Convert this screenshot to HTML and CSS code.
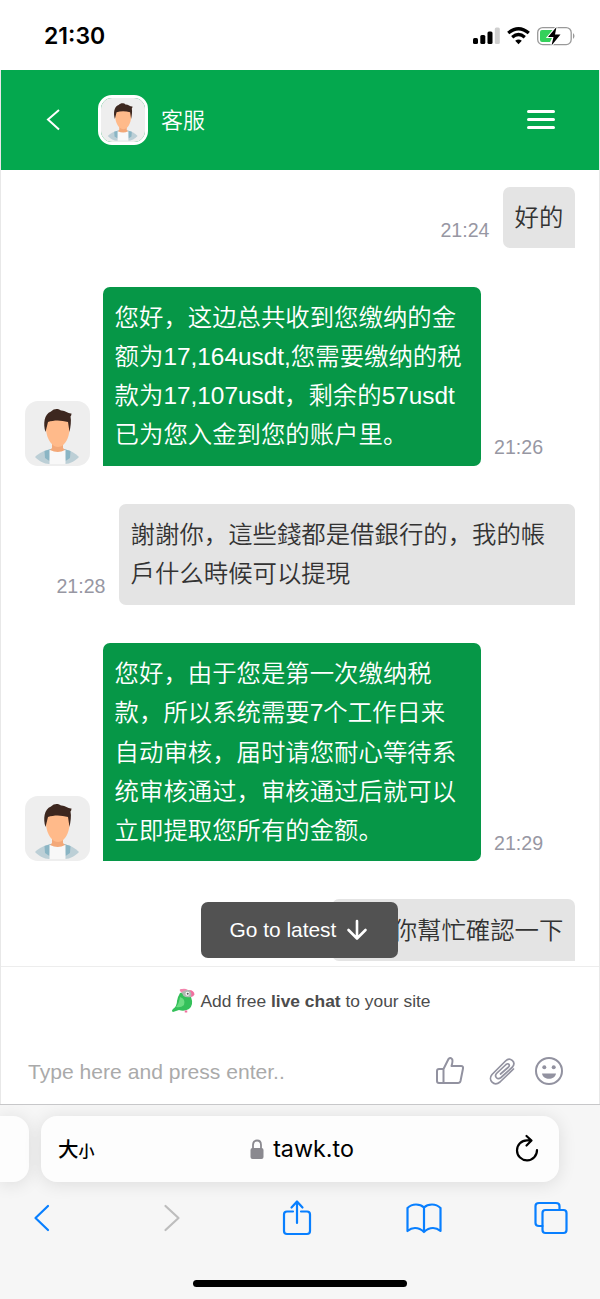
FILE: index.html
```html
<!DOCTYPE html>
<html lang="zh">
<head>
<meta charset="utf-8">
<title>客服</title>
<link rel="stylesheet" href="styles.css">
</head>
<body>
<svg class="defs" width="0" height="0">
  <symbol id="person" viewBox="0 0 65 65">
    <rect width="65" height="65" fill="#eeeeee"/>
    <path d="M10 56C14 52 20 49 25 48.500H40C45 49 50 52 54 56C50 60 45 63 40 63H24C19 63 14 60 10 56Z" fill="#bccfd6"/>
    <path d="M19.500 50L26 48L24.500 60L20 57ZM45.500 50L39 48L40.500 60L45 57Z" fill="#8ab5c4"/>
    <path d="M24.500 49H40.500V63H24.500Z" fill="#f8f8f8"/>
    <path d="M27 41H38V47L40 49Q33 53 25 49L27 47Z" fill="#f3a878"/>
    <path d="M21 21Q32 13 44.500 21C46 33 41 46 33 46C25 46 19.500 33 21 21Z" fill="#ffba8a"/>
    <path d="M20.500 31C18 23 19 13 26 10.500C29 7 34 7.500 36 9.500C40 9 43 13 46.500 12.500Q46.500 14.500 45.500 15.500C46.500 20 45.500 26 44.500 31L43 21C36 19 29 19 23 21Z" fill="#3d271f"/>
  </symbol>
</svg>

<div class="status">
  <span class="clock">21:30</span>
  <svg width="104" height="24" viewBox="0 0 104 24">
    <rect x="1" y="14" width="5" height="6" rx="1.500"/><rect x="8.300" y="11" width="5" height="9" rx="1.500"/><rect x="15.500" y="7.500" width="5" height="12.500" rx="1.500"/><rect x="22.800" y="3.500" width="5" height="16.500" rx="1.500" fill="#cfcfcf"/>
    <g fill="none" stroke="#000" stroke-width="3.300"><path d="M36.200 9Q46.500 0.500 56.800 9"/><path d="M40.200 13.200Q46.500 7.800 52.800 13.200"/></g>
    <path d="M43.200 16.800Q46.500 14.200 49.800 16.800L46.500 20.200Z"/>
    <rect x="65.700" y="3.600" width="33.500" height="17" rx="5" fill="#fff" stroke="#999" stroke-width="1.300"/>
    <path d="M70 6H81L76 14H80L78 18H70Q68 18 68 16V8Q68 6 70 6Z" fill="#34d15b"/>
    <path d="M84.500 3L76 13H81.500L79.500 21.500L88.500 10.500H83Z" stroke="#fff" stroke-width="2" paint-order="stroke"/>
    <path d="M101 9Q104 12 101 15Z" fill="#999"/>
  </svg>
</div>

<main class="chat">
  <header class="header">
    <svg class="back" width="16" height="24" viewBox="0 0 16 24"><path d="M14 2L3 11.500L14 21.500" fill="none" stroke="#fff" stroke-width="2"/></svg>
    <svg class="agent"><use href="#person"/></svg>
    <h1>客服</h1>
    <svg width="28" height="22" viewBox="0 0 28 22"><path d="M1.500 2.500H26.500M1.500 10.500H26.500M1.500 18.500H26.500" stroke="#fff" stroke-width="3" stroke-linecap="round"/></svg>
  </header>

  <section class="messages">
    <div class="row sent"><time>21:24</time><p class="bubble">好的</p></div>
    <div class="row received"><svg class="avatar"><use href="#person"/></svg><p class="bubble">您好，这边总共收到您缴纳的金<br>额为17,164usdt,您需要缴纳的税<br>款为17,107usdt，剩余的57usdt<br>已为您入金到您的账户里。</p><time>21:26</time></div>
    <div class="row sent"><time>21:28</time><p class="bubble wide">謝謝你，這些錢都是借銀行的，我的帳<br>戶什么時候可以提現</p></div>
    <div class="row received"><svg class="avatar"><use href="#person"/></svg><p class="bubble">您好，由于您是第一次缴纳税<br>款，所以系统需要7个工作日来<br>自动审核，届时请您耐心等待系<br>统审核通过，审核通过后就可以<br>立即提取您所有的金额。</p><time>21:29</time></div>
    <div class="row sent"><p class="bubble">謝謝你幫忙確認一下</p></div>
    <button class="latest">Go to latest
      <svg width="22" height="22" viewBox="0 0 22 22"><path d="M11 2V19M2.500 11L11 19.500L19.500 11" fill="none" stroke="#fff" stroke-width="2.600" stroke-linecap="round" stroke-linejoin="round"/></svg>
    </button>
  </section>

  <footer class="footer">
    <div class="brand">
      <svg width="24" height="26" viewBox="0 0 24 26">
        <path d="M9 3Q8 .5 11 1Q14 0 17 2L12 6Z" fill="#f285ad"/>
        <path d="M18 2Q23 2 23.500 6.500Q22.500 8.500 20 9Z" fill="#f26f9f"/>
        <path d="M10 5Q13 1.500 18 2Q21.500 5 20 9L16 12L11 9Z" fill="#b3b8b3"/>
        <path d="M9 5Q11 4 12.500 8Q15 10 20 9Q23 17 18 21Q13 24 8 22L2 24Q0 23 2 21Q6 18 6 13Q7 8 9 5Z" fill="#34c05a"/>
        <path d="M9 9Q15 11 13 17Q10 20 5 19Q8 16 9 9Z" fill="#6bdc82"/>
        <circle cx="16.500" cy="5.800" r="2" fill="#fff"/><circle cx="16.700" cy="5.800" r="1" fill="#555"/>
        <path d="M15 22.500V24.500" stroke="#f26f9f" stroke-width="2.500"/>
      </svg>
      <span>Add free <b>live chat</b> to your site</span>
    </div>
    <div class="composer">
      <span class="placeholder">Type here and press enter..</span>
      <svg width="30" height="30" viewBox="0 0 30 30"><path d="M8.500 13L13.500 3Q15.500 1 17.200 3.300Q18 5 16.500 10H26Q28.500 10 28 12.500L25.500 25Q25 27 23 27H4Q2 27 2 25V15Q2 13 4 13H8.500V27"/></svg>
      <svg class="clip" width="30" height="30" viewBox="0 0 30 30"><path d="M26.500 13L13 26C7 31 .5 24 5 18.500L18.500 5C23 .5 29.500 6 25.500 11L14 21.500C10.500 24.500 7 20.500 9.500 17.500L19 8.500Q21 7 22 8.500Q23 10 21 11.500L13.500 18"/></svg>
      <svg width="30" height="30" viewBox="0 0 30 30"><circle cx="15" cy="15" r="13"/><path class="solid" d="M8 17.500H22C21 24.500 9 24.500 8 17.500Z"/><circle class="solid" cx="10.300" cy="11.300" r="2"/><circle class="solid" cx="19.700" cy="11.300" r="2"/></svg>
    </div>
  </footer>
</main>

<div class="browser">
  <div class="tabs">
    <div class="tab previous"></div>
    <div class="tab address">
      <span class="size">大<small>小</small></span>
      <div class="site"><svg width="14" height="21" viewBox="0 0 14 21"><path d="M3 10V6Q3 1.500 7 1.500Q11 1.500 11 6V10" fill="none" stroke="#8a898f" stroke-width="1.800"/><rect x=".5" y="9" width="13" height="11" rx="2" fill="#8a898f"/></svg>tawk.to</div>
      <svg width="26" height="30" viewBox="0 0 26 30"><path d="M14 6.300H13A10 10 0 1 0 23 16M12.500 2L17.500 6.500L12.500 11.500M13 6.300H17" fill="none" stroke="#000" stroke-width="2.200" stroke-linecap="round" stroke-linejoin="round"/></svg>
    </div>
  </div>
  <nav class="tools">
    <svg width="18" height="30" viewBox="0 0 18 30"><path d="M15 3L2.500 15L15 27"/></svg>
    <svg class="disabled" width="18" height="30" viewBox="0 0 18 30"><path d="M2.500 3L15.500 15L2.500 27"/></svg>
    <svg width="30" height="38" viewBox="0 0 30 38"><path d="M11 12.500H5Q2 12.500 2 15.500V32Q2 35 5 35H25Q28 35 28 32V15.500Q28 12.500 25 12.500H19M15 24V3M9.500 8.500L15 2.500L20.500 8.500"/></svg>
    <svg width="36" height="32" viewBox="0 0 36 32"><path d="M18 5V30Q14 26 9 26Q5 26 1.500 29V6Q5 2.500 10 2.500Q15 2.500 18 5.500Q21 2.500 26 2.500Q31 2.500 34.500 6V29Q31 26 27 26Q22 26 18 30"/></svg>
    <svg width="34" height="34" viewBox="0 0 34 34"><path d="M8.500 25H5Q1.500 25 1.500 22V5Q1.500 2 5 2H22Q25.500 2 25.500 5V8.500"/><rect x="8.500" y="9" width="24" height="23" rx="3"/></svg>
  </nav>
  <div class="home"></div>
</div>
</body>
</html>
```

FILE: styles.css
```css
* { box-sizing: border-box; }
body {
  margin: 0;
  width: 600px;
  height: 1299px;
  overflow: hidden;
  background: #fff;
  font-family: "Liberation Sans", "Noto Sans CJK SC", sans-serif;
}
svg { flex: none; display: block; }
h1, p { margin: 0; font-weight: 400; }
.defs { position: absolute; }

.status {
  display: flex;
  justify-content: space-between;
  height: 70px;
  padding: 24px 24px 0 44px;
}
.clock { font: 600 23px/24px Inter, sans-serif; }

.chat {
  height: 1034px;
  border: solid #e8e8e8;
  border-width: 0 1px;
}
.header {
  display: flex;
  align-items: center;
  height: 100px;
  padding: 0 44px 0 44px;
  background: #04a84e;
  color: #fff;
}
.agent {
  width: 50px;
  height: 50px;
  margin: 0 13px 0 37px;
  border: 3px solid #fff;
  border-radius: 14px;
}
.header h1 { flex: 1; padding-top: 1px; font-size: 22px; font-weight: 350; line-height: 32px; }

.messages {
  position: relative;
  display: flex;
  flex-direction: column;
  gap: 38.200px;
  height: 796px;
  padding: 16.800px 24px 0;
  overflow: hidden;
}
.row { display: flex; align-items: flex-end; flex: none; }
.sent { justify-content: flex-end; gap: 13.500px; }
.received { gap: 13px; }
.bubble {
  padding: 11.200px 11.600px;
  font-size: 24.400px;
  font-weight: 350;
  line-height: 39.200px;
  white-space: nowrap;
}
.sent .bubble { background: #e4e4e4; color: #333; border-radius: 7px 7px 0 7px; }
.sent .wide { width: 456px; }
.received .bubble { width: 378px; background: #069747; color: #fff; border-radius: 7px 7px 7px 0; }
.avatar { width: 65px; height: 65px; border-radius: 13px; }
time { padding-bottom: 7.400px; color: #9797a3; font-size: 19.600px; line-height: 22px; }
.latest {
  position: absolute;
  left: 200px;
  top: 732px;
  display: flex;
  align-items: center;
  gap: 10px;
  width: 197px;
  height: 56px;
  padding: 0 0 0 28.500px;
  border: 0;
  border-radius: 7px;
  background: #525252;
  color: #fff;
  font-family: inherit;
  font-size: 20.900px;
}

.footer { height: 138px; border-top: 1px solid #ededed; }
.brand {
  display: flex;
  justify-content: center;
  align-items: center;
  gap: 5px;
  height: 68px;
  padding-left: 2px;
  color: #4c4c4c;
  font-size: 17.400px;
}
.composer { display: flex; align-items: center; height: 70px; padding: 2px 35px 0 27px; }
.composer svg { fill: none; stroke: #9292a0; stroke-width: 2; stroke-linejoin: round; stroke-linecap: round; }
.composer .clip { margin: 0 17px 0 22px; stroke-width: 1.700; }
.composer .solid { fill: #9292a0; stroke: none; }
.placeholder { flex: 1; padding-top: 1px; color: #aaa; font-size: 21.100px; }

.browser {
  height: 195px;
  border-top: 1px solid #c7c7c9;
  background: #f6f6f6;
  overflow: hidden;
}
.tabs { display: flex; gap: 12px; padding-top: 11px; }
.tab { height: 66px; background: #fdfdfd; box-shadow: 0 2px 18px #0000001c; }
.previous { width: 29px; border-radius: 0 16px 16px 0; }
.address {
  display: flex;
  align-items: center;
  justify-content: space-between;
  width: 518px;
  padding: 0 19px 0 17px;
  border-radius: 16px;
}
.size { width: 52px; font: 500 20.500px/30px "Noto Sans CJK TC", sans-serif; }
.size small { font-size: 16px; }
.site { display: flex; align-items: center; gap: 9px; margin-left: -20px; font: 400 23.300px/30px Inter, sans-serif; }
.tools {
  display: grid;
  grid-template-columns: 18px 18px 30px 36px 34px;
  column-gap: 112px;
  align-items: center;
  height: 72px;
  padding-left: 33px;
}
.tools svg:nth-child(3) { margin-left: -11px; }
.tools svg:nth-child(4) { margin-left: -29px; }
.tools svg:nth-child(5) { margin-left: -49px; }
.tools svg { fill: none; stroke: #087fff; stroke-width: 2.200; stroke-linecap: round; stroke-linejoin: round; }
.tools .disabled { stroke: #bdbdbd; }
.home { width: 214px; height: 7px; margin: 26px auto 0; border-radius: 4px; background: #000; }
```
